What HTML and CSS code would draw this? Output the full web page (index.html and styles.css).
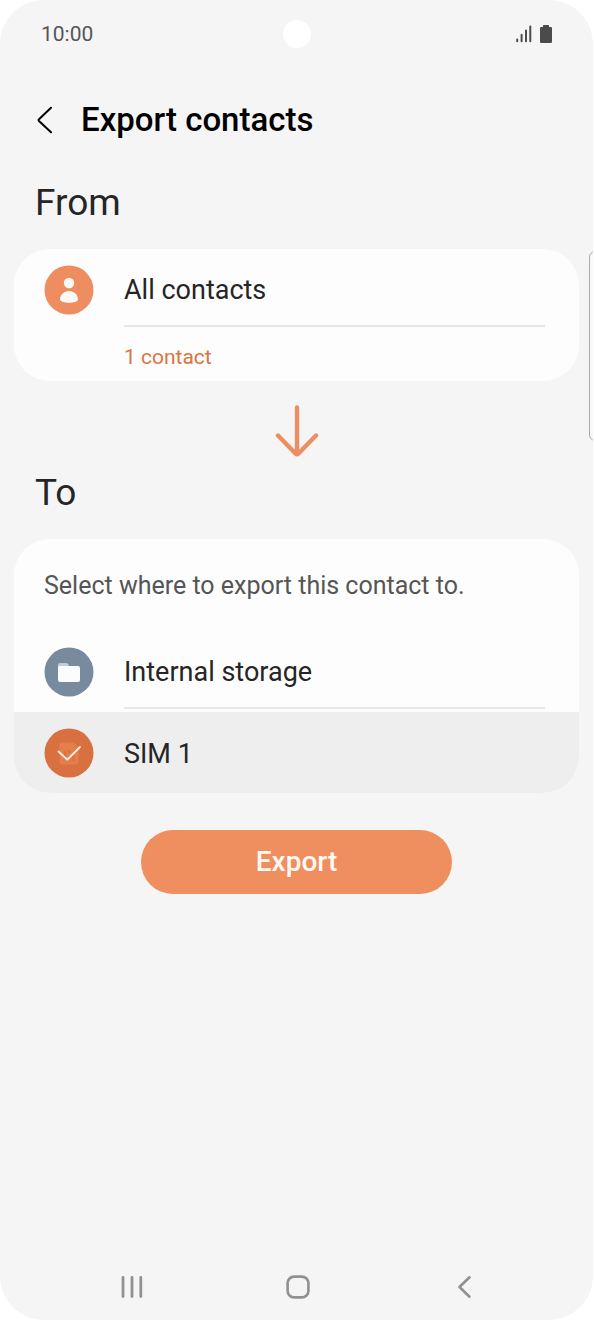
FILE: index.html
```html
<!DOCTYPE html>
<html lang="en">
<head>
<meta charset="utf-8">
<meta name="viewport" content="width=device-width, initial-scale=1">
<title>Export contacts</title>
<link rel="stylesheet" href="styles.css">
</head>
<body>
<div class="phone">
  <div class="status">
    <span class="clock">10:00</span>
    <span class="camera"></span>
    <span class="indicators">
      <svg width="16" height="18" viewBox="0 0 16 18" fill="none" stroke="#4b4b4b" stroke-width="2" stroke-linecap="round" aria-hidden="true"><path d="M1.2 14.5v1.7M5.6 9.8v6.4M10 5.5v10.7M14.3 1.6v14.6"/></svg>
      <svg width="12" height="18" viewBox="0 0 12 18" fill="#4b4b4b" aria-hidden="true"><path d="M3.6 0h4.8q.6 0 .6.6V2h1.8q1.2 0 1.2 1.200V16.800q0 1.200-1.200 1.200H1.200q-1.200 0-1.200-1.200V3.200Q0 2 1.200 2H3V.6Q3 0 3.600 0z"/></svg>
    </span>
  </div>

  <header class="header">
    <button class="back" type="button" aria-label="Navigate up">
      <svg width="16" height="28" viewBox="0 0 16 28" fill="none" stroke="#000" stroke-width="2" stroke-linecap="round" stroke-linejoin="round" aria-hidden="true"><path d="M14 1.800 2 13.200q-.9.900 0 1.800L14 26.200"/></svg>
    </button>
    <h1 class="title">Export contacts</h1>
  </header>

  <main class="main">
    <h2 class="section">From</h2>
    <section class="card">
      <div class="row">
        <svg class="icon" viewBox="0 0 50 50" aria-hidden="true"><circle cx="25" cy="25" r="24.500" fill="#ee8e60"/><circle cx="25" cy="18" r="5.200" fill="#fdf9f7"/><path d="M16 34.500C16 30 20 26 25 26s9 4 9 8.500c0 2-5 3.300-9 3.300s-9-1.300-9-3.300z" fill="#fdf9f7"/></svg>
        <span class="label">All contacts</span>
      </div>
      <p class="count">1 contact</p>
    </section>

    <svg class="arrow" viewBox="0 0 44 52" fill="none" stroke="#ec8e63" stroke-width="4.400" stroke-linecap="round" stroke-linejoin="round" aria-hidden="true"><path d="M22 2.500V49M3 30.500 20.500 48.500q1.500 1.500 3 0L41 30.500"/></svg>

    <h2 class="section">To</h2>
    <form class="destination">
      <fieldset class="card options">
        <legend class="hint">Select where to export this contact to.</legend>
        <label class="row option">
          <input class="radio" type="radio" name="destination">
          <svg class="icon" viewBox="0 0 50 50" aria-hidden="true"><circle cx="25" cy="25" r="24.500" fill="#778a9e"/><path d="M14 22v-4q0-2 2-2h6q2 0 2.600 1.600L26 22z" fill="#c3cbd8"/><rect x="14" y="19" width="22" height="16" rx="2" fill="#fbfcfd"/></svg>
          <span class="label">Internal storage</span>
        </label>
        <label class="row option">
          <input class="radio" type="radio" name="destination" checked>
          <svg class="icon" viewBox="0 0 50 50" aria-hidden="true"><circle cx="25" cy="25" r="24.500" fill="#d8713f"/><path d="M18.500 14.500h11l5 5V33.500q0 3-3 3h-13q-3 0-3-3v-16q0-3 3-3z" fill="#e67d4c"/><path d="M21 23v6M25 22v4M29.500 27v6" stroke="#d8713f" stroke-width="2"/><path d="m14.500 23.500 8.800 8.200L36 19" fill="none" stroke="#fff0e6" stroke-width="1.800" stroke-linecap="round" stroke-linejoin="round"/></svg>
          <span class="label">SIM 1</span>
        </label>
      </fieldset>
      <button class="export" type="button">Export</button>
    </form>
  </main>

  <nav class="navbar" aria-label="System">
    <button type="button" aria-label="Recent apps"><svg width="24" height="24" viewBox="0 0 24 24" fill="none" stroke="#919191" stroke-width="2.800" stroke-linecap="round"><path d="M3 2.400v19.200M12 2.400v19.200M20.800 2.400v19.200"/></svg></button>
    <button type="button" aria-label="Home"><svg width="24" height="24" viewBox="0 0 24 24" fill="none" stroke="#919191" stroke-width="2.600"><rect x="1.600" y="1.600" width="20.800" height="20.800" rx="6.500"/></svg></button>
    <button type="button" aria-label="Back"><svg width="24" height="24" viewBox="0 0 24 24" fill="none" stroke="#919191" stroke-width="2.600" stroke-linecap="round" stroke-linejoin="round"><path d="M17.500 2.300 7.500 12l10 9.700"/></svg></button>
  </nav>
  <div class="edge-handle"></div>
</div>
</body>
</html>
```
FILE: styles.css
```css
* {
  box-sizing: border-box;
}

body {
  margin: 0;
  background: #fff;
  font-family: Roboto, "Liberation Sans", sans-serif;
  color: #252525;
}

h1, h2, p {
  margin: 0;
}

button {
  font: inherit;
  border: 0;
  padding: 0;
  background: none;
  cursor: pointer;
}

svg {
  display: block;
}

.phone {
  position: relative;
  display: flex;
  flex-direction: column;
  min-height: 100vh;
  margin-right: 1px;
  border-radius: 44px;
  background: #f5f5f5;
  overflow: hidden;
}

.status {
  display: grid;
  grid-template-columns: 1fr auto 1fr;
  align-items: center;
  height: 68px;
  padding: 0 41px;
}

.clock {
  font-size: 21px;
  line-height: 24px;
  color: #555;
}

.camera {
  width: 28px;
  height: 28px;
  border-radius: 50%;
  background: #fff;
}

.indicators {
  display: flex;
  justify-content: flex-end;
  align-items: center;
  gap: 8px;
}

.header {
  display: flex;
  align-items: center;
  gap: 28px;
  height: 103px;
  padding: 0 37px;
}

.title {
  font-size: 33px;
  line-height: 40px;
  font-weight: 500;
  color: #000;
}

.main {
  flex: 1;
  padding: 0 14px;
}

.section {
  padding: 8px 21px 22px;
  font-size: 37px;
  line-height: 48px;
  font-weight: 400;
}

.card {
  border-radius: 36px;
  background: #fdfdfd;
  overflow: hidden;
}

.row {
  display: grid;
  grid-template-columns: 50px 1fr;
  column-gap: 30px;
  padding: 0 34px 0 30px;
  align-items: center;
}

.icon {
  width: 50px;
  height: 50px;
  margin-top: 3px;
}

.label {
  display: flex;
  align-items: center;
  height: 78px;
  padding-top: 6px;
  border-bottom: 2px solid #e6e6e6;
  font-size: 27px;
  line-height: 32px;
}

.count {
  padding: 17px 34px 11px 110px;
  font-size: 21px;
  line-height: 26px;
  color: #dc7440;
}

.arrow {
  width: 44px;
  height: 52px;
  margin: 24px auto 4px;
}

.options {
  margin: 0;
  padding: 0;
  border: 0;
  min-width: 0;
}

.hint {
  float: left;
  width: 100%;
  padding: 31px 30px 29px;
  font-size: 25px;
  line-height: 32px;
  color: #555;
}

.option {
  clear: both;
  padding-bottom: 3px;
  cursor: pointer;
}

.radio {
  grid-area: 1 / 1;
  appearance: none;
  width: 50px;
  height: 50px;
  margin: 0;
  border-radius: 50%;
}

.option .icon {
  grid-area: 1 / 1;
  pointer-events: none;
}

.option:has(.radio:checked) {
  padding-bottom: 0;
  background: #eee;
}

.option:has(.radio:checked) .icon {
  margin-top: 0;
}

.option:has(.radio:checked) .label {
  height: 81px;
  padding-top: 2px;
  border-bottom: 0;
}

.export {
  display: block;
  width: 55%;
  height: 64px;
  margin: 37px auto 0;
  border-radius: 32px;
  background: #ef8f60;
  color: #fff8f2;
  font-size: 28px;
  line-height: 32px;
  font-weight: 500;
}

.navbar {
  display: grid;
  grid-template-columns: repeat(3, 1fr);
  justify-items: center;
  padding: 0 46px 9px 49px;
}

.navbar button {
  display: grid;
  place-items: center;
  width: 48px;
  height: 48px;
}

.edge-handle {
  position: absolute;
  top: 251px;
  right: -8px;
  width: 12px;
  height: 190px;
  border: 1px solid #aaa;
  border-radius: 6px;
  background: #f8f8f8;
}
```
